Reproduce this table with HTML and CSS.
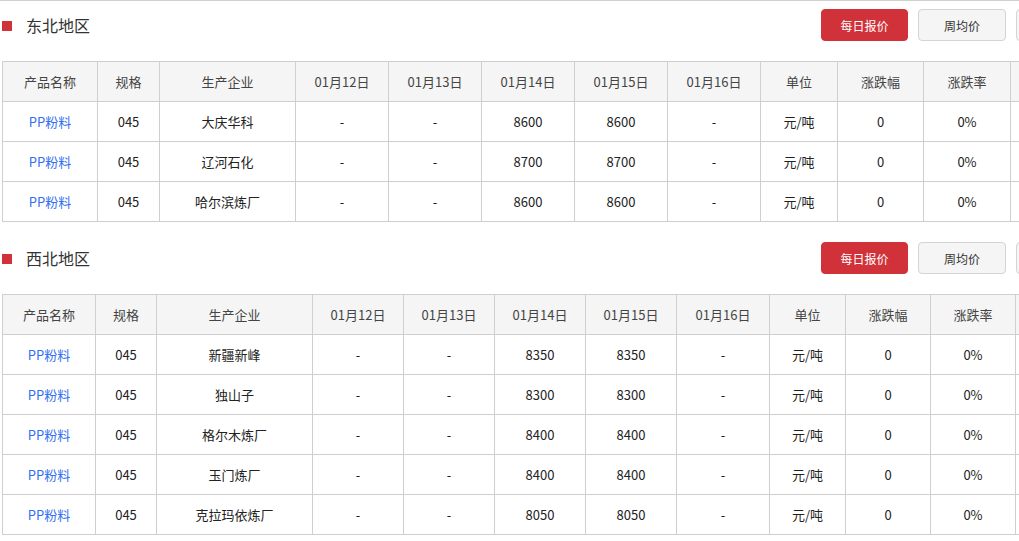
FILE: index.html
```html
<!DOCTYPE html>
<html lang="zh-CN">
<head>
<meta charset="utf-8">
<title>PP粉料 报价</title>
<link rel="stylesheet" href="styles.css">
</head>
<body>
<div class="wrap">
  <section class="section">
    <div class="head">
      <h2 class="title"><span class="mark"></span>东北地区</h2>
      <div class="btns">
        <button class="btn btn-active">每日报价</button>
        <button class="btn">周均价</button>
        <button class="btn" aria-label="月均价"></button>
      </div>
    </div>
    <table class="grid">
      <colgroup>
        <col class="w95"><col class="w62"><col class="w136"><col class="w93"><col class="w93"><col class="w93"><col class="w93"><col class="w93"><col class="w77"><col class="w86"><col class="w87"><col class="w80">
      </colgroup>
      <thead>
        <tr><th>产品名称</th><th>规格</th><th>生产企业</th><th>01月12日</th><th>01月13日</th><th>01月14日</th><th>01月15日</th><th>01月16日</th><th>单位</th><th>涨跌幅</th><th>涨跌率</th><th></th></tr>
      </thead>
      <tbody>
        <tr><td><a class="link" href="#">PP粉料</a></td><td>045</td><td>大庆华科</td><td>-</td><td>-</td><td>8600</td><td>8600</td><td>-</td><td>元/吨</td><td>0</td><td>0%</td><td></td></tr>
        <tr><td><a class="link" href="#">PP粉料</a></td><td>045</td><td>辽河石化</td><td>-</td><td>-</td><td>8700</td><td>8700</td><td>-</td><td>元/吨</td><td>0</td><td>0%</td><td></td></tr>
        <tr><td><a class="link" href="#">PP粉料</a></td><td>045</td><td>哈尔滨炼厂</td><td>-</td><td>-</td><td>8600</td><td>8600</td><td>-</td><td>元/吨</td><td>0</td><td>0%</td><td></td></tr>
      </tbody>
    </table>
  </section>

  <section class="section">
    <div class="head">
      <h2 class="title"><span class="mark"></span>西北地区</h2>
      <div class="btns">
        <button class="btn btn-active">每日报价</button>
        <button class="btn">周均价</button>
        <button class="btn" aria-label="月均价"></button>
      </div>
    </div>
    <table class="grid">
      <colgroup>
        <col class="w93"><col class="w61"><col class="w156"><col class="w91"><col class="w91"><col class="w91"><col class="w91"><col class="w93"><col class="w76"><col class="w85"><col class="w85"><col class="w80">
      </colgroup>
      <thead>
        <tr><th>产品名称</th><th>规格</th><th>生产企业</th><th>01月12日</th><th>01月13日</th><th>01月14日</th><th>01月15日</th><th>01月16日</th><th>单位</th><th>涨跌幅</th><th>涨跌率</th><th></th></tr>
      </thead>
      <tbody>
        <tr><td><a class="link" href="#">PP粉料</a></td><td>045</td><td>新疆新峰</td><td>-</td><td>-</td><td>8350</td><td>8350</td><td>-</td><td>元/吨</td><td>0</td><td>0%</td><td></td></tr>
        <tr><td><a class="link" href="#">PP粉料</a></td><td>045</td><td>独山子</td><td>-</td><td>-</td><td>8300</td><td>8300</td><td>-</td><td>元/吨</td><td>0</td><td>0%</td><td></td></tr>
        <tr><td><a class="link" href="#">PP粉料</a></td><td>045</td><td>格尔木炼厂</td><td>-</td><td>-</td><td>8400</td><td>8400</td><td>-</td><td>元/吨</td><td>0</td><td>0%</td><td></td></tr>
        <tr><td><a class="link" href="#">PP粉料</a></td><td>045</td><td>玉门炼厂</td><td>-</td><td>-</td><td>8400</td><td>8400</td><td>-</td><td>元/吨</td><td>0</td><td>0%</td><td></td></tr>
        <tr><td><a class="link" href="#">PP粉料</a></td><td>045</td><td>克拉玛依炼厂</td><td>-</td><td>-</td><td>8050</td><td>8050</td><td>-</td><td>元/吨</td><td>0</td><td>0%</td><td></td></tr>
      </tbody>
    </table>
  </section>
</div>
</body>
</html>
```

FILE: styles.css
```css
html, body {
  margin: 0;
  padding: 0;
  overflow: hidden;
  background: #fff;
}

body {
  font-family: "Noto Sans CJK SC", "Microsoft YaHei", sans-serif;
  color: #333;
  font-size: 13px;
}

.wrap {
  border-top: 1px solid #d0d0d0;
  width: 1103px;
  padding-left: 2px;
  padding-top: 8px;
}

.section + .section {
  margin-top: 20px;
}

.head {
  display: flex;
  align-items: center;
  justify-content: space-between;
  height: 32px;
  margin-bottom: 20px;
}

.title {
  display: flex;
  align-items: center;
  margin: 0;
  font-size: 16px;
  font-weight: normal;
  color: #333;
  line-height: 20px;
}

.mark {
  display: inline-block;
  width: 10px;
  height: 10px;
  background: #d1323a;
  margin-right: 14px;
  margin-top: 2px;
}

.btns {
  display: flex;
  gap: 10px;
  margin-right: 1px;
}

.btn {
  width: 88px;
  height: 32px;
  border: 1px solid #d4d4d4;
  border-radius: 4px;
  background: #f5f5f5;
  color: #333;
  font-family: inherit;
  font-size: 12px;
  padding: 0;
  cursor: pointer;
}

.btn-active {
  width: 87px;
  background: #d1323a;
  border-color: #d1323a;
  color: #fff;
}

.grid {
  border-collapse: collapse;
  table-layout: fixed;
  width: 1088px;
}

.grid th,
.grid td {
  border: 1px solid #cfcfcf;
  height: 39px;
  padding: 0;
  text-align: center;
  font-size: 13px;
  white-space: nowrap;
  overflow: hidden;
}

.grid th {
  background: #f5f5f5;
  font-weight: normal;
  color: #444;
}

.grid td {
  color: #222;
}

.link {
  color: #3370f0;
  text-decoration: none;
}

.w61 { width: 61px; }
.w62 { width: 62px; }
.w76 { width: 76px; }
.w77 { width: 77px; }
.w80 { width: 80px; }
.w85 { width: 85px; }
.w86 { width: 86px; }
.w87 { width: 87px; }
.w91 { width: 91px; }
.w93 { width: 93px; }
.w95 { width: 95px; }
.w136 { width: 136px; }
.w156 { width: 156px; }
```
